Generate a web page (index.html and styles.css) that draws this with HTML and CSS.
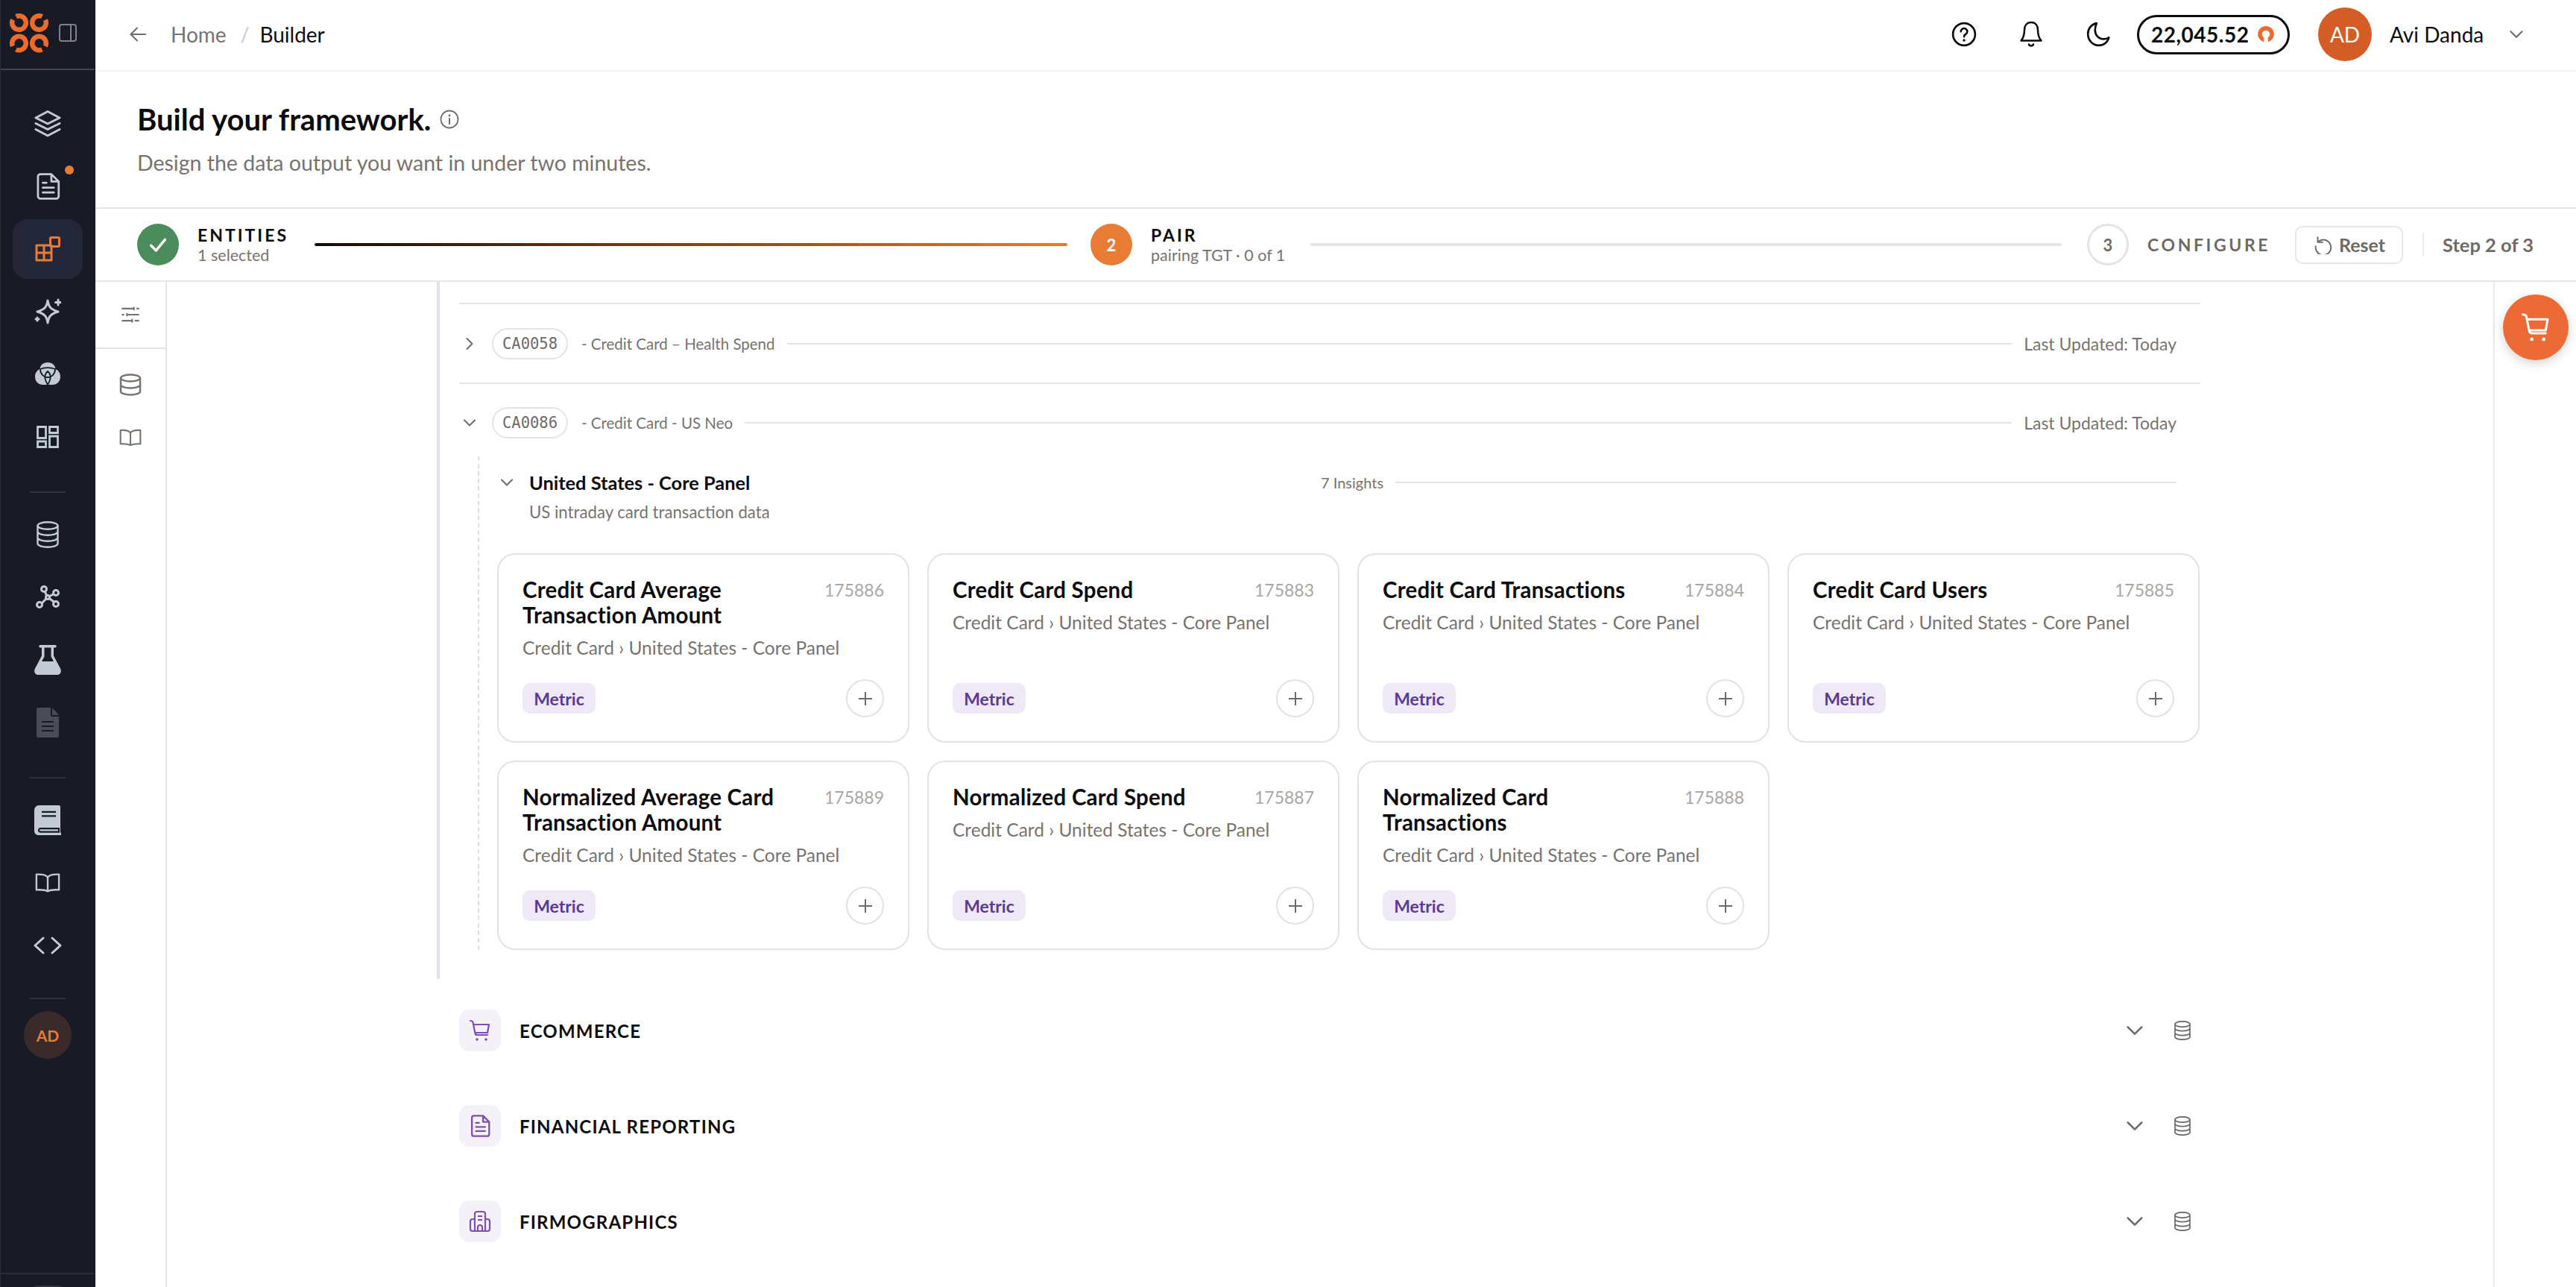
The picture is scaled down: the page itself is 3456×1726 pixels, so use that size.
FILE: index.html
```html
<!DOCTYPE html>
<html lang="en">
<head>
  <meta charset="UTF-8" />
  <meta name="viewport" content="width=device-width, initial-scale=1.0" />
  <title>Builder</title>
  <link rel="stylesheet" href="styles.css">
</head>
<body>
  <!-- icon sprite -->
  <svg class="sprite" xmlns="http://www.w3.org/2000/svg">
    <symbol id="i-layers" viewBox="0 0 36 36"><path d="M18 1.500 34 10 18 18 2 10Z M2 17.500 18 25.500 34 17.500 M2 25.500 18 34 34 25.500" fill="none" stroke="currentColor" stroke-width="3" stroke-linejoin="round" stroke-linecap="round"/></symbol>
    <symbol id="i-doc" viewBox="2.500 1 18 22"><path d="M6 2h9l6 6v12a2 2 0 0 1-2 2H6a2 2 0 0 1-2-2V4a2 2 0 0 1 2-2Z M15 2v6h6 M8 9h3 M8 13h9 M8 17h9" transform="translate(-.5 0)" fill="none" stroke="currentColor" stroke-width="1.700" stroke-linejoin="round" stroke-linecap="round"/></symbol>
    <symbol id="i-blocks" viewBox="0 0 34 34"><path d="M2 12h10v10H2Z M12 22h10v10H12Z M2 22h10v10H2Z M12 12h10v10H12Z" fill="none" stroke="currentColor" stroke-width="3" stroke-linejoin="round"/><rect x="20.500" y="1.500" width="12" height="12" rx="1.500" fill="none" stroke="currentColor" stroke-width="3"/></symbol>
    <symbol id="i-sparkle" viewBox="0 0 36 36"><path d="M18 3C19.500 12 22 15 32 18 22 21 19.500 24 18 33 16.500 24 14 21 4 18 14 15 16.500 12 18 3Z" fill="none" stroke="currentColor" stroke-width="3" stroke-linejoin="round"/><path d="M32 2v7M28.500 5.500h7M4 26v4M2 28h4" stroke="currentColor" stroke-width="3" stroke-linecap="round"/></symbol>
    <symbol id="i-venn" viewBox="0 0 34 32"><path d="M17 0c6 0 10 3.500 10.500 9 4 1.500 6.500 5.500 6.500 10 0 6.500-4.500 11-10.500 11h-13C4.500 30 0 25.500 0 19c0-4.500 2.500-8.500 6.500-10C7 3.500 11 0 17 0Z" fill="currentColor"/><path d="M17 12c4.500 4 5 10 0 18-5-8-4.500-14 0-18Z M7 9c5-2.500 15-2.500 20 0 0 7-5 11-10 11S7 16 7 9Z" fill="none" stroke="#181b26" stroke-width="1.800"/></symbol>
    <symbol id="i-grid" viewBox="0 0 30 30"><path d="M1.500 1.500h11v15h-11Z M17.500 1.500h11v8h-11Z M1.500 21h11v7.500h-11Z M17.500 14h11v14.500h-11Z" fill="none" stroke="currentColor" stroke-width="2.800"/></symbol>
    <symbol id="i-db4" viewBox="0 0 30 36"><ellipse cx="15" cy="6" rx="13.500" ry="4.700" fill="none" stroke="currentColor" stroke-width="2.400"/><path d="M1.500 6v24c0 2.500 6 4.700 13.500 4.700s13.500-2.200 13.500-4.700V6 M1.500 14c0 2.500 6 4.700 13.500 4.700s13.500-2.200 13.500-4.700 M1.500 22c0 2.500 6 4.700 13.500 4.700s13.500-2.200 13.500-4.700" fill="none" stroke="currentColor" stroke-width="2.400"/></symbol>
    <symbol id="i-dbs" viewBox="0 0 22 26"><ellipse cx="11" cy="4.500" rx="10" ry="3.700" fill="none" stroke="currentColor" stroke-width="1.700"/><path d="M1 4.500v17c0 2 4.500 3.700 10 3.700s10-1.700 10-3.700v-17 M1 10c0 2 4.500 3.700 10 3.700s10-1.700 10-3.700 M1 16c0 2 4.500 3.700 10 3.700s10-1.700 10-3.700" fill="none" stroke="currentColor" stroke-width="1.700"/></symbol>
    <symbol id="i-graph" viewBox="0 0 34 32"><path d="M12 6 17 16 7 26 M17 16 28 10 M17 16 28 24" stroke="currentColor" stroke-width="3" fill="none"/><g fill="#181b26" stroke="currentColor" stroke-width="3"><circle cx="12" cy="5" r="3.500"/><circle cx="28" cy="10" r="3.500"/><circle cx="28" cy="25" r="3.500"/><circle cx="6" cy="26" r="3.500"/><circle cx="17" cy="16" r="2.500"/></g></symbol>
    <symbol id="i-flask" viewBox="0 0 36 40"><path d="M8 0h20a1.500 1.500 0 0 1 0 3.500h-2v11l9 17c2 4 0 8.500-4 8.500H5c-4 0-6-4.500-4-8.500l9-17v-11H8A1.500 1.500 0 0 1 8 0Zm5.500 3.500v12L10 22h16l-3.500-6.500v-12Z" fill="currentColor" fill-rule="evenodd"/></symbol>
    <symbol id="i-docfill" viewBox="0 0 30 40"><path d="M2 0h17v10a2 2 0 0 0 2 2h9v26a2 2 0 0 1-2 2H2a2 2 0 0 1-2-2V2a2 2 0 0 1 2-2Z" fill="currentColor"/><path d="M21 0l9 10h-9Z" fill="currentColor"/><path d="M7 19h16M7 25h16M7 31h16" stroke="#181b26" stroke-width="2"/></symbol>
    <symbol id="i-book" viewBox="0 0 36 36" preserveAspectRatio="none"><path d="M6 0h27a2 2 0 0 1 2 2v31h1v3H6c-3 0-6-2-6-5V6c0-3 3-6 6-6Z" fill="currentColor"/><path d="M10 8h19M10 13h19M6 30c0-1 1-2 2-2h25v4H8c-1 0-2 0-2-2Z" stroke="#181b26" stroke-width="2" fill="none"/></symbol>
    <symbol id="i-open" viewBox="0 0 36 28"><path d="M18 26V6C15 2 10 1.500 2 2v22c7-.5 12 0 16 2 4-2 9-2.500 16-2V2c-8-.5-13 0-16 4" fill="none" stroke="currentColor" stroke-width="2.500" stroke-linejoin="round"/></symbol>
    <symbol id="i-code" viewBox="0 0 38 24"><path d="M13 2 2 12l11 10 M25 2l11 10-11 10" fill="none" stroke="currentColor" stroke-width="3" stroke-linecap="round" stroke-linejoin="round"/></symbol>
    <symbol id="i-chev" viewBox="0 0 24 24"><path d="M5 8.500l7 7 7-7" fill="none" stroke="currentColor" stroke-width="2" stroke-linecap="round" stroke-linejoin="round"/></symbol>
    <symbol id="i-cart" viewBox="0 0 30 30"><path d="M2 2c2 0 3 .5 3.500 2l3 15c.3 1.500 1 2 2.500 2h14 M6 7h21l-2 11H8.500" fill="none" stroke="currentColor" stroke-width="2.200" stroke-linecap="round" stroke-linejoin="round"/><circle cx="11" cy="27" r="1.800" fill="currentColor"/><circle cx="23" cy="27" r="1.800" fill="currentColor"/></symbol>
    <symbol id="i-db2" viewBox="0 0 30 30"><ellipse cx="15" cy="6" rx="13" ry="4.500" fill="none" stroke="currentColor" stroke-width="2.500"/><path d="M2 6v18c0 2.500 6 4.500 13 4.500s13-2 13-4.500V6 M2 15c0 2.500 6 4.500 13 4.500s13-2 13-4.500" fill="none" stroke="currentColor" stroke-width="2.500"/></symbol>
  </svg>

  <aside class="sidebar">
    <div class="brand">
      <svg class="logo" viewBox="0 0 54 54" aria-hidden="true">
        <g fill="none" stroke="#ee6c2b" stroke-width="6.500">
          <circle cx="13.500" cy="13.500" r="9.300" pathLength="100" stroke-dasharray="89 11" transform="rotate(245 13.500 13.500)"/>
          <circle cx="40.500" cy="13.500" r="9.300" pathLength="100" stroke-dasharray="89 11" transform="rotate(335 40.500 13.500)"/>
          <circle cx="13.500" cy="41" r="9.300" pathLength="100" stroke-dasharray="89 11" transform="rotate(155 13.500 41)"/>
          <circle cx="40.500" cy="41" r="9.300" pathLength="100" stroke-dasharray="89 11" transform="rotate(65 40.500 41)"/>
        </g>
      </svg>
      <span class="panel-toggle"></span>
    </div>
    <nav class="nav">
      <a class="nav-item"><svg class="i36"><use href="#i-layers"/></svg></a>
      <a class="nav-item has-dot"><svg class="i36"><use href="#i-doc"/></svg></a>
      <a class="nav-item active"><svg class="i34"><use href="#i-blocks"/></svg></a>
      <a class="nav-item"><svg class="i36"><use href="#i-sparkle"/></svg></a>
      <a class="nav-item"><svg class="i34"><use href="#i-venn"/></svg></a>
      <a class="nav-item"><svg class="i30"><use href="#i-grid"/></svg></a>
      <div class="nav-sep"></div>
      <a class="nav-item"><svg class="i30 i-tall36"><use href="#i-db4"/></svg></a>
      <a class="nav-item"><svg class="i34"><use href="#i-graph"/></svg></a>
      <a class="nav-item"><svg class="i36 i-tall"><use href="#i-flask"/></svg></a>
      <a class="nav-item dim"><svg class="i30 i-tall"><use href="#i-docfill"/></svg></a>
      <div class="nav-sep"></div>
      <a class="nav-item"><svg class="i36 i-tall"><use href="#i-book"/></svg></a>
      <a class="nav-item"><svg class="i34"><use href="#i-open"/></svg></a>
      <a class="nav-item"><svg class="i38"><use href="#i-code"/></svg></a>
      <div class="nav-sep last"></div>
      <div class="mini-avatar">AD</div>
    </nav>
    <div class="side-foot"><span class="side-foot-pill"></span></div>
  </aside>

  <div class="main">
    <header class="topbar">
      <svg class="back" viewBox="0 0 24 24"><path d="M22 12H3M11 3.500 2.500 12l8.500 8.500" fill="none" stroke="currentColor" stroke-width="2" stroke-linecap="round" stroke-linejoin="round"/></svg>
      <span class="crumb">Home</span>
      <span class="crumb-sep">/</span>
      <span class="crumb current">Builder</span>
      <div class="top-right">
        <svg class="top-icon" viewBox="0 0 32 32"><circle cx="16" cy="16" r="14" fill="none" stroke="currentColor" stroke-width="2.500"/><path d="M12 12.500a4 4 0 1 1 6 3.500c-1.500.8-2 1.500-2 3" fill="none" stroke="currentColor" stroke-width="2.500" stroke-linecap="round"/><circle cx="16" cy="23.500" r="1.600" fill="currentColor"/></svg>
        <svg class="top-icon" viewBox="0 0 32 36"><path d="M16 2c-6 0-9 4.500-9 10 0 8-1.500 11-4.500 14.500h27C26.500 23 25 20 25 12c0-5.500-3-10-9-10Z M13 31.500c.8 2.500 5.200 2.500 6 0" fill="none" stroke="currentColor" stroke-width="2.500" stroke-linejoin="round" stroke-linecap="round"/></svg>
        <svg class="top-icon" viewBox="0 0 32 32"><path d="M14 2C7 3.500 3 9 3 15.500 3 23.500 9 30 16.500 30c6.500 0 11.500-4 13-10-2 1.500-4 2-6.500 2C16.500 22 12 17 12 10.500 12 7 12.800 4.500 14 2Z" fill="none" stroke="currentColor" stroke-width="2.500" stroke-linejoin="round"/></svg>
        <div class="credits">
          <span>22,045.52</span>
          <svg class="coin" viewBox="0 0 24 24"><path d="M9.500 21.500A10 10 0 1 1 14.500 21.500V16A4.800 4.800 0 1 0 9.500 16Z" fill="#ee6c2b"/></svg>
        </div>
        <div class="avatar">AD</div>
        <span class="user-name">Avi Danda</span>
        <svg class="user-chev"><use href="#i-chev"/></svg>
      </div>
    </header>

    <section class="hero">
      <h1>Build your framework.
        <svg class="info" viewBox="0 0 26 26"><circle cx="13" cy="13" r="11.500" fill="none" stroke="currentColor" stroke-width="1.800"/><path d="M13 12v7" stroke="currentColor" stroke-width="2" stroke-linecap="round"/><circle cx="13" cy="8" r="1.400" fill="currentColor"/></svg>
      </h1>
      <p>Design the data output you want in under two minutes.</p>
    </section>

    <section class="stepper">
      <div class="step step-a">
        <span class="step-dot done"><svg viewBox="0 0 24 24"><path d="M5 13l5 5 9-11" fill="none" stroke="#fff" stroke-width="2.600" stroke-linecap="round" stroke-linejoin="round"/></svg></span>
        <div><div class="step-name">ENTITIES</div><div class="step-sub">1 selected</div></div>
      </div>
      <div class="step-line progress"></div>
      <div class="step step-b">
        <span class="step-dot now">2</span>
        <div><div class="step-name">PAIR</div><div class="step-sub">pairing TGT · 0 of 1</div></div>
      </div>
      <div class="step-line"></div>
      <div class="step step-c">
        <span class="step-dot todo">3</span>
        <div class="step-name muted">CONFIGURE</div>
      </div>
      <button class="reset">
        <svg viewBox="0 0 24 24"><path d="M6 3v6h6 M6.500 8.500A9.500 9.500 0 1 1 3.500 14" fill="none" stroke="currentColor" stroke-width="1.800" stroke-linecap="round" stroke-linejoin="round"/></svg>
        Reset
      </button>
      <span class="step-count">Step 2 of 3</span>
    </section>

    <div class="workspace">
      <aside class="rail">
        <div class="rail-top">
          <svg viewBox="0 0 24 24"><path d="M2 5h14M19 5h3M2 12h3M8 12h14M2 19h12M17 19h5M16 3v4M8 10v4M14 17v4" fill="none" stroke="currentColor" stroke-width="1.800"/></svg>
        </div>
        <div class="rail-links">
          <svg class="rail-db"><use href="#i-db2"/></svg>
          <svg class="rail-book"><use href="#i-open"/></svg>
        </div>
      </aside>

      <main class="content">
        <div class="tree">
          <div class="row">
            <svg class="row-chev closed"><use href="#i-chev"/></svg>
            <span class="chip">CA0058</span>
            <span class="row-title">- Credit Card – Health Spend</span>
            <span class="rule"></span>
            <span class="row-date">Last Updated: Today</span>
          </div>
          <div class="row open">
            <svg class="row-chev"><use href="#i-chev"/></svg>
            <span class="chip">CA0086</span>
            <span class="row-title">- Credit Card - US Neo</span>
            <span class="rule"></span>
            <span class="row-date">Last Updated: Today</span>
          </div>
          <div class="panel">
            <div class="panel-head">
              <svg class="panel-chev"><use href="#i-chev"/></svg>
              <span class="panel-title">United States - Core Panel</span>
              <span class="panel-count">7 Insights</span>
              <span class="rule"></span>
            </div>
            <div class="panel-sub">US intraday card transaction data</div>
            <div class="cards">
              <article class="card">
                <div class="card-top"><h3>Credit Card Average Transaction Amount</h3><span class="card-id">175886</span></div>
                <div class="card-path">Credit Card › United States - Core Panel</div>
                <div class="card-foot"><span class="badge">Metric</span><span class="add"></span></div>
              </article>
              <article class="card">
                <div class="card-top"><h3>Credit Card Spend</h3><span class="card-id">175883</span></div>
                <div class="card-path">Credit Card › United States - Core Panel</div>
                <div class="card-foot"><span class="badge">Metric</span><span class="add"></span></div>
              </article>
              <article class="card">
                <div class="card-top"><h3>Credit Card Transactions</h3><span class="card-id">175884</span></div>
                <div class="card-path">Credit Card › United States - Core Panel</div>
                <div class="card-foot"><span class="badge">Metric</span><span class="add"></span></div>
              </article>
              <article class="card">
                <div class="card-top"><h3>Credit Card Users</h3><span class="card-id">175885</span></div>
                <div class="card-path">Credit Card › United States - Core Panel</div>
                <div class="card-foot"><span class="badge">Metric</span><span class="add"></span></div>
              </article>
              <article class="card">
                <div class="card-top"><h3>Normalized Average Card Transaction Amount</h3><span class="card-id">175889</span></div>
                <div class="card-path">Credit Card › United States - Core Panel</div>
                <div class="card-foot"><span class="badge">Metric</span><span class="add"></span></div>
              </article>
              <article class="card">
                <div class="card-top"><h3>Normalized Card Spend</h3><span class="card-id">175887</span></div>
                <div class="card-path">Credit Card › United States - Core Panel</div>
                <div class="card-foot"><span class="badge">Metric</span><span class="add"></span></div>
              </article>
              <article class="card">
                <div class="card-top"><h3>Normalized Card Transactions</h3><span class="card-id">175888</span></div>
                <div class="card-path">Credit Card › United States - Core Panel</div>
                <div class="card-foot"><span class="badge">Metric</span><span class="add"></span></div>
              </article>
            </div>
          </div>
        </div>

        <div class="category">
          <span class="cat-icon"><svg><use href="#i-cart"/></svg></span>
          <span class="cat-name">ECOMMERCE</span>
          <svg class="cat-chev"><use href="#i-chev"/></svg>
          <svg class="cat-db"><use href="#i-dbs"/></svg>
        </div>
        <div class="category">
          <span class="cat-icon"><svg><use href="#i-doc"/></svg></span>
          <span class="cat-name">FINANCIAL REPORTING</span>
          <svg class="cat-chev"><use href="#i-chev"/></svg>
          <svg class="cat-db"><use href="#i-dbs"/></svg>
        </div>
        <div class="category">
          <span class="cat-icon">
            <svg viewBox="0 0 30 30"><path d="M8 28V5a3 3 0 0 1 3-3h8a3 3 0 0 1 3 3v23 M8 12H5a3 3 0 0 0-3 3v10a3 3 0 0 0 3 3h20a3 3 0 0 0 3-3V15a3 3 0 0 0-3-3h-3 M12 8h6M12 13h6 M12 28v-5a3 3 0 0 1 6 0v5" fill="none" stroke="currentColor" stroke-width="2.200" stroke-linejoin="round"/></svg>
          </span>
          <span class="cat-name">FIRMOGRAPHICS</span>
          <svg class="cat-chev"><use href="#i-chev"/></svg>
          <svg class="cat-db"><use href="#i-dbs"/></svg>
        </div>
      </main>

      <aside class="cart-rail">
        <button class="cart-btn"><svg><use href="#i-cart"/></svg></button>
      </aside>
    </div>
  </div>
</body>
</html>
```

FILE: styles.css
```css
* {
  margin: 0;
  padding: 0;
  box-sizing: border-box;
}

html, body {
  height: 100%;
}

body {
  display: flex;
  height: 1726px;
  overflow: hidden;
  font-family: Lato, "Open Sans", sans-serif;
  color: #0c0c0c;
  background: #fff;
}

.sprite {
  display: none;
}

/* sidebar */
.sidebar {
  width: 128px;
  flex-shrink: 0;
  display: flex;
  flex-direction: column;
  background: #181b26;
  border-left: 1px solid #2a2d38;
  color: #c3cad5;
  overflow: hidden;
}

.brand {
  height: 94px;
  flex-shrink: 0;
  display: flex;
  align-items: center;
  gap: 13px;
  padding: 0 0 5px 11px;
  border-bottom: 2px solid #44464f;
  margin-right: 1px;
}

.logo {
  width: 54px;
  height: 54px;
}

.panel-toggle {
  width: 24px;
  height: 24px;
  border: 2px solid #7c8190;
  border-radius: 4px;
  position: relative;
}

.panel-toggle::after {
  content: "";
  position: absolute;
  top: 0;
  bottom: 0;
  right: 5px;
  width: 2px;
  background: #7c8190;
}

.nav {
  display: flex;
  flex-direction: column;
  align-items: center;
  gap: 4px;
  padding: 32px 0 0;
  margin-left: -1px;
}

.nav-item {
  position: relative;
  width: 94px;
  height: 80px;
  display: flex;
  align-items: center;
  justify-content: center;
  border-radius: 20px;
}

.nav-item.active {
  background: #232738;
  color: #e87c35;
}

.nav-item.dim {
  color: #4a4d58;
}

.has-dot::after {
  content: "";
  position: absolute;
  top: 12px;
  right: 12px;
  width: 12px;
  height: 12px;
  border-radius: 50%;
  background: #e87c35;
}

.i30 { width: 30px; height: 30px; }
.i32 { width: 32px; height: 32px; }
.i34 { width: 34px; height: 34px; }
.i36 { width: 36px; height: 36px; }
.i38 { width: 38px; height: 38px; }
.i-tall { height: 40px; }
.i-tall36 { height: 36px; }

.nav-sep {
  width: 48px;
  height: 2px;
  background: #2f323d;
  margin: 29px 0 12px;
}

.nav-sep.last {
  margin: 26px 0 12px;
}

.mini-avatar {
  width: 64px;
  height: 64px;
  border-radius: 50%;
  background: #3a2a29;
  color: #e87c35;
  font-size: 21px;
  font-weight: 700;
  display: flex;
  align-items: center;
  justify-content: center;
}

.side-foot {
  margin-top: auto;
  height: 19px;
  border-top: 2px solid #2a2d38;
  margin-right: 1px;
  display: flex;
  justify-content: center;
}

.side-foot-pill {
  width: 64px;
  height: 40px;
  margin-top: 15px;
  border-radius: 20px;
  background: #30333e;
}

/* main column */
.main {
  flex: 1;
  min-width: 0;
  display: flex;
  flex-direction: column;
}

.topbar {
  height: 96px;
  flex-shrink: 0;
  display: flex;
  align-items: center;
  padding: 0 0 2px 45px;
  border-bottom: 2px solid #f1f1f1;
}

.back {
  width: 24px;
  height: 24px;
  color: #6f6a66;
  margin-right: 32px;
}

.crumb {
  font-size: 28px;
  color: #78736f;
}

.crumb.current {
  color: #0c0c0c;
}

.crumb-sep {
  font-size: 26px;
  color: #c9c6c3;
  margin: 0 14px 0 19px;
}

.top-right {
  margin-left: auto;
  display: flex;
  align-items: center;
  padding-right: 67px;
}

.top-icon {
  width: 34px;
  height: 36px;
  margin-right: 56px;
}

.top-icon:nth-child(3) {
  margin-right: 35px;
}

.credits {
  width: 205px;
  height: 53px;
  display: flex;
  align-items: center;
  justify-content: space-between;
  padding: 0 16px 0 16px;
  border: 3px solid #0c0c0c;
  border-radius: 27px;
  font-size: 28px;
  font-weight: 700;
  letter-spacing: .5px;
}

.coin {
  width: 26px;
  height: 26px;
}

.avatar {
  width: 72px;
  height: 72px;
  margin-left: 38px;
  border-radius: 50%;
  background: #d45d27;
  color: #fff;
  font-size: 28px;
  display: flex;
  align-items: center;
  justify-content: center;
}

.user-name {
  width: 129px;
  font-size: 28px;
  margin-left: 24px;
  white-space: nowrap;
}

.user-chev {
  width: 26px;
  height: 26px;
  margin-left: 28px;
  color: #6f6a66;
}

.hero {
  height: 184px;
  flex-shrink: 0;
  padding: 39px 0 0 56px;
  border-bottom: 2px solid #e6e6e6;
}

.hero h1 {
  font-size: 40px;
  font-weight: 700;
  line-height: 50px;
  display: flex;
  align-items: center;
  gap: 12px;
}

.info {
  width: 26px;
  height: 26px;
  color: #6f6a66;
}

.hero p {
  font-size: 28.500px;
  line-height: 36px;
  margin-top: 15px;
  color: #78736f;
}

/* stepper */
.stepper {
  height: 98px;
  flex-shrink: 0;
  display: flex;
  align-items: center;
  padding-left: 56px;
  border-bottom: 2px solid #e6e6e6;
}

.step {
  display: flex;
  align-items: center;
  gap: 25px;
}

.step-a { width: 238px; }
.step-b { width: 295px; margin-left: 31px; }
.step-c { width: 279px; margin-left: 34px; gap: 25px; }

.step-dot {
  width: 56px;
  height: 56px;
  flex-shrink: 0;
  border-radius: 50%;
  display: flex;
  align-items: center;
  justify-content: center;
  font-size: 22px;
  font-weight: 700;
}

.step-dot svg {
  width: 32px;
  height: 32px;
}

.done { background: #4a8c5c; }
.now { background: #e87c35; color: #fff; }
.todo { border: 3px solid #e4e4e4; color: #6f6a66; }

.step-name {
  font-size: 23px;
  font-weight: 700;
  letter-spacing: 3px;
  line-height: 28px;
}

.step-name.muted {
  color: #6f6a66;
  letter-spacing: 3.600px;
}

.step-sub {
  font-size: 21.500px;
  line-height: 26px;
  color: #78736f;
}

.step-line {
  width: 1008px;
  height: 4px;
  border-radius: 2px;
  background: #e4e4e4;
}

.step-line.progress {
  width: 1010px;
  background: linear-gradient(90deg, #120c06, #e87c35);
}

.reset {
  width: 145px;
  height: 51px;
  flex-shrink: 0;
  display: flex;
  align-items: center;
  justify-content: center;
  gap: 9px;
  background: #fff;
  border: 2px solid #e6e6e6;
  border-radius: 10px;
  font: 700 25px Lato, sans-serif;
  color: #6f6a66;
  margin-right: 26px;
}

.reset svg {
  width: 26px;
  height: 26px;
}

.step-count {
  padding-left: 25px;
  border-left: 2px solid #eee;
  font-size: 25.500px;
  font-weight: 700;
  line-height: 32px;
  color: #6f6a66;
  white-space: nowrap;
}

/* workspace */
.workspace {
  flex: 1;
  min-height: 0;
  display: flex;
}

.rail {
  width: 96px;
  flex-shrink: 0;
  border-right: 2px solid #e4e4e4;
  color: #78736f;
}

.rail-top {
  height: 90px;
  display: flex;
  align-items: center;
  justify-content: center;
  border-bottom: 2px solid #e4e4e4;
}

.rail-top svg {
  width: 28px;
  height: 28px;
}

.rail-links {
  display: flex;
  flex-direction: column;
  align-items: center;
  gap: 41px;
  padding-top: 33px;
}

.rail-db,
.rail-book {
  width: 30px;
  height: 30px;
}

.content {
  flex: 1;
  min-width: 0;
  padding-left: 362px;
  overflow: hidden;
}

.tree {
  width: 2366px;
  margin-bottom: 41px;
  padding: 28px 0 39px 26px;
  border-left: 4px solid #e3dff0;
  border-bottom-left-radius: 2px;
}

.row {
  height: 107px;
  display: flex;
  align-items: center;
  padding-right: 32px;
  border-top: 2px solid #e4e4e4;
}

.row.open {
  height: 99px;
  padding-top: 7px;
}

.row-chev {
  width: 24px;
  height: 24px;
  margin-left: 2px;
  margin-right: 18px;
  color: #6f6a66;
}

.row-chev.closed {
  transform: rotate(-90deg);
}

.chip {
  height: 42px;
  width: 102px;
  display: flex;
  align-items: center;
  justify-content: center;
  border: 2px solid #e4e4e4;
  border-radius: 21px;
  font-family: "DejaVu Sans Mono", monospace;
  font-size: 20.500px;
  color: #6f6a66;
}

.row-title {
  margin-left: 18px;
  font-size: 20.500px;
  color: #78736f;
}

.rule {
  flex: 1;
  height: 2px;
  margin: 0 16px;
  background: #e4e4e4;
}

.row-date {
  font-size: 23px;
  color: #78736f;
}

.panel {
  margin-left: 25px;
  padding: 21px 0 0 24px;
  border-left: 2px dashed #dedede;
}

.panel-head {
  height: 28px;
  display: flex;
  align-items: center;
  padding-right: 32px;
}

.panel-chev {
  width: 24px;
  height: 24px;
  margin-left: 1px;
  margin-right: 18px;
  color: #6f6a66;
}

.panel-title {
  width: 1062px;
  font-size: 25.400px;
  font-weight: 700;
}

.panel-count {
  font-size: 20px;
  color: #78736f;
}

.panel-head .rule {
  margin-right: 0;
}

.panel-sub {
  margin: 12px 0 41px 43px;
  font-size: 22.200px;
  line-height: 28px;
  color: #78736f;
}

.cards {
  display: grid;
  grid-template-columns: repeat(4, 553px);
  grid-auto-rows: 254px;
  gap: 24px;
}

.card {
  display: flex;
  flex-direction: column;
  padding: 30px 32px 32px;
  border: 2px solid #e4e2de;
  border-radius: 24px;
  background: #fff;
}

.card-top {
  display: flex;
  justify-content: space-between;
}

.card h3 {
  max-width: 360px;
  font-size: 29.500px;
  font-weight: 700;
  line-height: 34px;
  letter-spacing: .2px;
}

.card-id {
  font-size: 23px;
  line-height: 34px;
  color: #a9a6a3;
}

.card-path {
  margin-top: 13px;
  font-size: 24.500px;
  line-height: 28px;
  color: #78736f;
}

.card-foot {
  margin-top: auto;
  display: flex;
  align-items: center;
  justify-content: space-between;
}

.badge {
  width: 98px;
  height: 41px;
  display: flex;
  align-items: center;
  justify-content: center;
  border-radius: 10px;
  background: #efe8f6;
  color: #5b3a96;
  font-size: 23px;
  font-weight: 700;
}

.add {
  position: relative;
  width: 51px;
  height: 51px;
  border: 2px solid #e4e2de;
  border-radius: 50%;
}

.add::before,
.add::after {
  content: "";
  position: absolute;
  left: 50%;
  top: 50%;
  background: #6f6a66;
}

.add::before {
  width: 18px;
  height: 2px;
  transform: translate(-50%, -50%);
}

.add::after {
  width: 2px;
  height: 18px;
  transform: translate(-50%, -50%);
}

.category {
  width: 2366px;
  height: 56px;
  display: flex;
  align-items: center;
  margin: 0 0 72px 30px;
}

.cat-icon {
  width: 56px;
  height: 56px;
  flex-shrink: 0;
  display: flex;
  align-items: center;
  justify-content: center;
  border-radius: 14px;
  background: #f4f1f9;
  color: #7d4fb0;
}

.cat-icon svg {
  width: 30px;
  height: 30px;
}

.cat-name {
  flex: 1;
  margin-left: 25px;
  font-size: 24px;
  font-weight: 700;
  letter-spacing: 1.200px;
}

.cat-chev {
  width: 32px;
  height: 32px;
  color: #6f6a66;
  margin-right: 37px;
}

.cat-db {
  width: 22px;
  height: 26px;
  color: #6f6a66;
  margin-right: 43px;
}

.cart-rail {
  width: 111px;
  flex-shrink: 0;
  display: flex;
  justify-content: center;
  padding-top: 17px;
  border-left: 2px solid #e9e9e9;
}

.cart-btn {
  width: 88px;
  height: 88px;
  display: flex;
  align-items: center;
  justify-content: center;
  border: 0;
  border-radius: 50%;
  background: #ec6a35;
  color: #fff;
  box-shadow: 0 4px 14px rgba(0, 0, 0, .18);
}

.cart-btn svg {
  width: 40px;
  height: 40px;
}
```
